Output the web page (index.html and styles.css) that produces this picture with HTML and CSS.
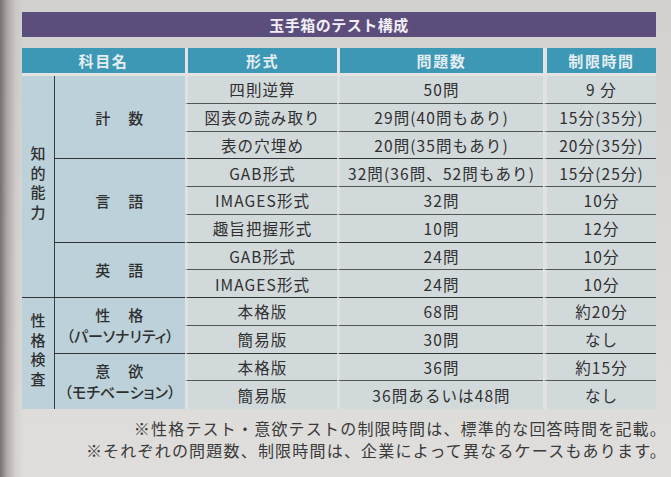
FILE: index.html
```html
<!DOCTYPE html>
<html lang="ja">
<head>
<meta charset="utf-8">
<title>玉手箱のテスト構成</title>
<link rel="stylesheet" href="styles.css">
</head>
<body>
<div class="sheet">
  <h1 class="title">玉手箱のテスト構成</h1>
  <table class="spec">
    <colgroup>
      <col class="c-cat"><col class="c-subj"><col class="c-form"><col class="c-num"><col class="c-time">
    </colgroup>
    <thead>
      <tr>
        <th colspan="2">科目名</th>
        <th class="gap">形式</th>
        <th class="gap">問題数</th>
        <th class="gap wide">制限時間</th>
      </tr>
    </thead>
    <tbody>
      <tr>
        <td class="cat" rowspan="8"><span class="vert">知的能力</span></td>
        <td class="subj" rowspan="3">計　数</td>
        <td class="form">四則逆算</td><td class="num">50問</td><td class="time">9 分</td>
      </tr>
      <tr><td class="form">図表の読み取り</td><td class="num">29問(40問もあり)</td><td class="time">15分(35分)</td></tr>
      <tr class="grp-end"><td class="form">表の穴埋め</td><td class="num">20問(35問もあり)</td><td class="time">20分(35分)</td></tr>
      <tr>
        <td class="subj" rowspan="3">言　語</td>
        <td class="form">GAB形式</td><td class="num">32問(36問、52問もあり)</td><td class="time">15分(25分)</td>
      </tr>
      <tr><td class="form">IMAGES形式</td><td class="num">32問</td><td class="time">10分</td></tr>
      <tr class="grp-end"><td class="form">趣旨把握形式</td><td class="num">10問</td><td class="time">12分</td></tr>
      <tr>
        <td class="subj" rowspan="2">英　語</td>
        <td class="form">GAB形式</td><td class="num">24問</td><td class="time">10分</td>
      </tr>
      <tr class="grp-end"><td class="form">IMAGES形式</td><td class="num">24問</td><td class="time">10分</td></tr>
      <tr>
        <td class="cat end" rowspan="4"><span class="vert">性格検査</span></td>
        <td class="subj" rowspan="2"><span class="name">性　格</span><span class="sub">（パーソナリティ）</span></td>
        <td class="form">本格版</td><td class="num">68問</td><td class="time">約20分</td>
      </tr>
      <tr class="grp-end"><td class="form">簡易版</td><td class="num">30問</td><td class="time">なし</td></tr>
      <tr>
        <td class="subj end" rowspan="2"><span class="name">意　欲</span><span class="sub">（モチベーション）</span></td>
        <td class="form">本格版</td><td class="num">36問</td><td class="time">約15分</td>
      </tr>
      <tr class="last"><td class="form">簡易版</td><td class="num">36問あるいは48問</td><td class="time">なし</td></tr>
    </tbody>
  </table>
  <div class="notes">
    <p>※性格テスト・意欲テストの制限時間は、標準的な回答時間を記載。</p>
    <p>※それぞれの問題数、制限時間は、企業によって異なるケースもあります。</p>
  </div>
</div>
</body>
</html>
```

FILE: styles.css
```css
html, body {
  margin: 0;
  padding: 0;
}

body {
  width: 671px;
  height: 477px;
  overflow: hidden;
  font-family: "Noto Sans CJK JP", "Noto Sans", sans-serif;
  color: #2f2f2f;
  background:
    linear-gradient(to right, rgba(95, 85, 88, 0.8) 0, rgba(120, 110, 112, 0.45) 7px, rgba(160, 152, 152, 0.15) 16px, rgba(0, 0, 0, 0) 24px),
    linear-gradient(#d2d1ce, #dddcd9 80%, #dfdedc);
}

.sheet {
  padding: 12px 0 0 22px;
}

.title {
  margin: 0 15px 11px 0;
  width: 634px;
  height: 25px;
  line-height: 25px;
  background: #5c4e7c;
  color: #f1eff5;
  font-size: 15px;
  font-weight: 700;
  letter-spacing: 0.5px;
  text-align: center;
}

.spec {
  table-layout: fixed;
  width: 634px;
  border-collapse: separate;
  border-spacing: 0;
}

.c-cat { width: 33px; }
.c-subj { width: 130px; }
.c-form { width: 152px; }
.c-num { width: 206px; }
.c-time { width: 113px; }

.spec th {
  box-sizing: border-box;
  height: 28px;
  padding: 0 0 1px;
  background: #3d98b5;
  color: #e3edf1;
  font-size: 15px;
  font-weight: 700;
  letter-spacing: 1.6px;
  text-align: center;
  border-bottom: 3px solid #e3e4e2;
}

.spec th.gap {
  border-left: 3px solid #e3e4e2;
}

.spec th.wide {
  border-left-width: 4px;
}

.spec td {
  box-sizing: border-box;
  height: 27.75px;
  padding: 0;
  text-align: center;
  vertical-align: middle;
  font-size: 15.5px;
  letter-spacing: 1.1px;
  white-space: nowrap;
  border-bottom: 1px solid #555556;
}

.spec td.form,
.spec td.num,
.spec td.time {
  background: #d2d9db;
  border-left: 3px solid #e0e2e1;
  font-family: "Liberation Sans Narrow", "Noto Sans CJK JP", sans-serif;
}

.spec td.num,
.spec td.form {
  font-family: "Noto Sans CJK JP", sans-serif;
}

.spec td.time {
  border-left-width: 4px;
}

.spec tr.grp-end td {
  border-bottom-color: #333335;
}

.spec tr.last td {
  border-bottom: none;
}

.spec td.cat {
  background: #bcd1d9;
  border-right: 1px solid #3a3b3d;
  border-bottom-color: #333335;
  font-size: 15px;
  font-weight: 500;
}

.spec td.subj {
  background: #bcd1d9;
  border-bottom-color: #333335;
  font-size: 15px;
  font-weight: 500;
  letter-spacing: 1.5px;
}

.spec td.end {
  border-bottom: none;
}

.vert {
  display: inline-block;
  writing-mode: vertical-rl;
  letter-spacing: 4.5px;
  line-height: 1;
}

.subj .name,
.subj .sub {
  display: block;
  line-height: 21px;
}

.subj .sub {
  font-size: 15px;
  letter-spacing: 0;
  font-feature-settings: "palt";
}

.notes {
  width: 645px;
  margin-top: 8px;
  text-align: right;
  font-size: 16px;
  letter-spacing: 1.2px;
  color: #3a3a3a;
}

.notes p {
  margin: 0;
  line-height: 22px;
}
```
